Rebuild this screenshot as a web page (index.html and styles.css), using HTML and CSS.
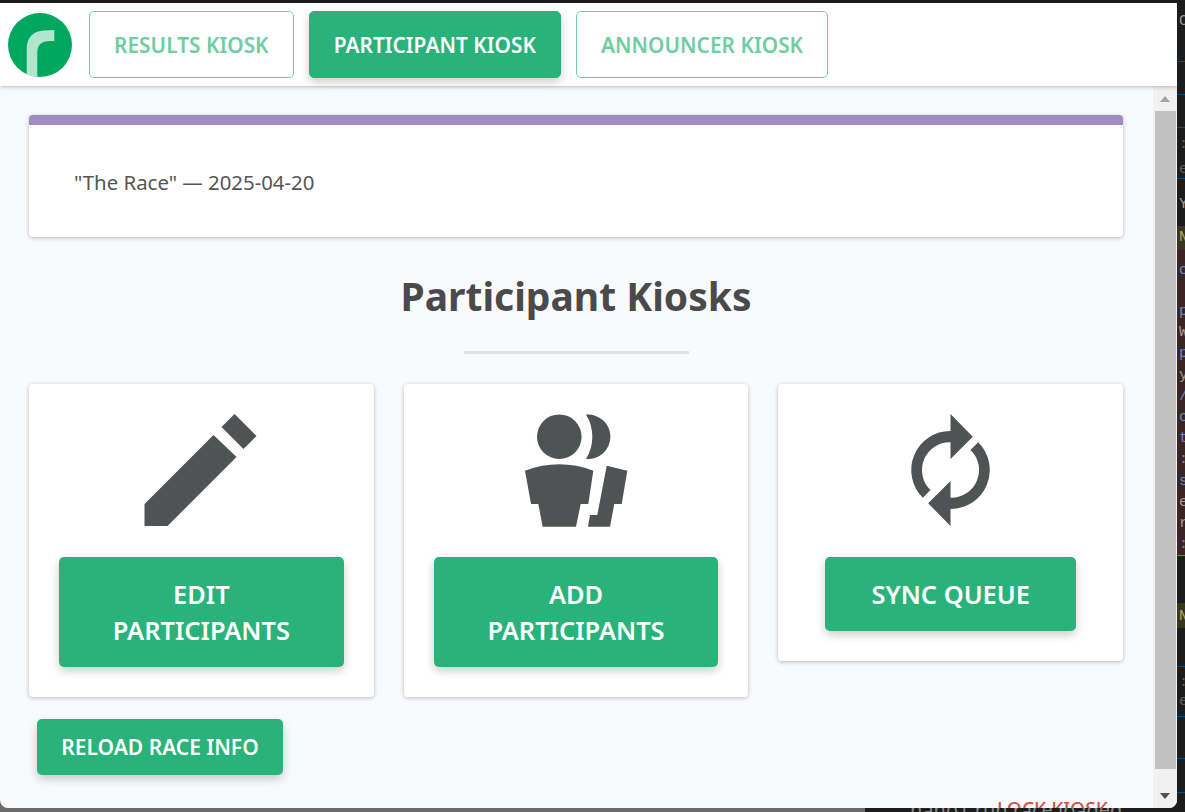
FILE: index.html
```html
<!DOCTYPE html>
<html lang="en">
<head>
  <meta charset="UTF-8">
  <meta name="viewport" content="width=device-width, initial-scale=1.0">
  <title>Participant Kiosks</title>
  <link rel="stylesheet" href="styles.css">
</head>
<body>
  <div class="screen">
    <div class="main-col">
      <div class="top-edge"></div>
      <div class="window">
        <header class="topnav">
          <svg class="logo" viewBox="0 0 64 64" aria-label="logo">
            <circle cx="32" cy="32" r="32" fill="#00a85f"/>
            <path d="M18.7 62V36C18.7 24 26 18 36 17.6L46.3 17V28H42C33 28 29.3 32 29.3 40V64Z" fill="#b2e5cd"/>
          </svg>
          <a class="tab">RESULTS KIOSK</a>
          <a class="tab active">PARTICIPANT KIOSK</a>
          <a class="tab">ANNOUNCER KIOSK</a>
        </header>
        <div class="body-row">
          <main class="content">
            <section class="race-card">
              <p>"The Race" — 2025-04-20</p>
            </section>
            <h1>Participant Kiosks</h1>
            <hr class="divider">
            <div class="cards">
              <div class="card">
                <svg class="icon" viewBox="0 0 114 114">
                  <path d="M0.5 90L69.5 21L92.5 43L23.5 112H0.5Z"/>
                  <path d="M90.5 0L112.5 22L99.5 35L77.5 13Z"/>
                </svg>
                <button class="btn big">EDIT PARTICIPANTS</button>
              </div>
              <div class="card">
                <svg class="icon" viewBox="0 0 114 114">
                  <circle cx="40.3" cy="22.7" r="22.3"/>
                  <path d="M67 .6A22.3 22.3 0 1 1 67 45A42 42 0 0 0 67 .6Z"/>
                  <path d="M6 56.7Q40.3 43.9 74.3 56.7L69.3 90H61.7L57 112.7H23.7L19.3 90H12Z"/>
                  <path d="M87.7 51.7L108.3 56.7L102.7 90H95.3L91 112.7H69L71 101H78.3Z"/>
                </svg>
                <button class="btn big">ADD PARTICIPANTS</button>
              </div>
              <div class="card">
                <svg class="icon" viewBox="0 0 114 114">
                  <path d="M56.5 0L78.8 22.7L56.5 45V28.3A27.7 27.7 0 0 0 36.5 76L28.8 83.7A39 39 0 0 1 56.5 17Z"/>
                  <path d="M56.5 112L34.2 89.3L56.5 67V83.7A27.7 27.7 0 0 0 76.5 36L84.2 28.3A39 39 0 0 1 56.5 95Z"/>
                </svg>
                <button class="btn big">SYNC QUEUE</button>
              </div>
            </div>
            <button class="btn reload">RELOAD RACE INFO</button>
          </main>
          <div class="scrollbar">
            <span class="arrow up"></span>
            <span class="thumb"></span>
            <span class="arrow down"></span>
          </div>
        </div>
        <span class="lock-link">LOCK KIOSK</span>
      </div>
      <div class="bottom-strip">
        <span class="log-line">nano1 run race loaded</span>
      </div>
    </div>

    <!-- sliver of the editor behind the window -->
    <div class="editor-edge">
      <div class="ln gap-12"></div>
      <div class="ln first-line">C</div>
      <div class="ln rule gap-30"></div>
      <div class="ln rule gap-33"></div>
      <div class="ln rule gap-33"></div>
      <div class="ln dim colon-top">:</div>
      <div class="ln dim rule er-top">er</div>
      <div class="ln y-line">Y</div>
      <div class="ln warn warn-top">N</div>
      <div class="err-block">
        <div class="ln link err-first">c</div>
        <div class="ln link row">p</div>
        <div class="ln row">W</div>
        <div class="ln link row">p</div>
        <div class="ln row">y</div>
        <div class="ln link row">/</div>
        <div class="ln link row">c</div>
        <div class="ln link row">t</div>
        <div class="ln link row">:</div>
        <div class="ln link row">s</div>
        <div class="ln row">e</div>
        <div class="ln row">r</div>
        <div class="ln link row">:</div>
      </div>
      <div class="ln gap-47"></div>
      <div class="ln warn warn-bottom">N</div>
      <div class="ln rule gap-39"></div>
      <div class="ln dim colon-bottom">:</div>
      <div class="ln dim rule er-bottom">er</div>
      <div class="ln rule gap-42"></div>
      <div class="ln rule gap-34"></div>
    </div>
  </div>
</body>
</html>
```
FILE: styles.css
```css
html, body {
  margin: 0;
  height: 100%;
}

body {
  background: #1c1c1c;
  font-family: "Noto Sans", sans-serif;
  color: #4a4a4a;
  overflow: hidden;
}

.screen {
  display: flex;
  height: 812px;
}

.main-col {
  width: 1177px;
  flex: none;
  display: flex;
  flex-direction: column;
  background: linear-gradient(to right, #6b6b6b 865px, #1c1c1c 865px);
}

.top-edge {
  height: 3px;
  flex: none;
  background: #1c1c1c;
}

.window {
  position: relative;
  height: 805px;
  flex: none;
  background: #f9fafc;
  border-radius: 0 0 8px 8px;
  overflow: hidden;
  display: flex;
  flex-direction: column;
}

/* Top nav */
.topnav {
  height: 83px;
  flex: none;
  display: flex;
  align-items: center;
  background: #fff;
  box-shadow: 0 1px 4px rgba(0, 0, 0, 0.25);
  position: relative;
  padding: 0 8px;
  box-sizing: border-box;
}

.logo {
  width: 64px;
  height: 64px;
  margin-right: 17px;
}

.tab {
  height: 67px;
  box-sizing: border-box;
  display: flex;
  align-items: center;
  padding: 0 24px;
  margin-right: 15px;
  font-size: 20.8px;
  letter-spacing: 0.05px;
  font-weight: 600;
  color: #6fcda3;
  background: #fff;
  border: 1px solid #6fcda3;
  border-radius: 5px;
}

.tab.active {
  background: #29b37a;
  border-color: #29b37a;
  color: #fff;
  box-shadow: 0 4px 10px rgba(0, 0, 0, 0.2);
}

/* Content */
.body-row {
  flex: 1;
  display: flex;
  min-height: 0;
}

.content {
  flex: 1;
  padding: 29px 30px 0 29px;
  box-sizing: border-box;
}

.race-card {
  height: 122px;
  box-sizing: border-box;
  background: #fff;
  border-top: 10px solid #a08bc3;
  border-radius: 4px;
  box-shadow: 0 1px 4px rgba(0, 0, 0, 0.25);
  padding: 45px 45px 0;
}

.race-card p {
  margin: 0;
  font-size: 20.4px;
  line-height: 24px;
  color: #555;
}

h1 {
  margin: 32px 0 0;
  font-size: 39px;
  line-height: 54px;
  font-weight: 700;
  text-align: center;
}

.divider {
  width: 225px;
  height: 3px;
  margin: 28px auto 30px;
  border: 0;
  background: #e0e2e6;
}

.cards {
  display: flex;
  align-items: flex-start;
  gap: 30px;
}

.card {
  flex: 1;
  background: #fff;
  border-radius: 4px;
  box-shadow: 0 1px 4px rgba(0, 0, 0, 0.25);
  padding: 30px;
  display: flex;
  flex-direction: column;
  align-items: center;
}

.icon {
  width: 114px;
  height: 114px;
  fill: #505353;
  margin-bottom: 29px;
}

.btn {
  font-family: inherit;
  font-weight: 600;
  color: #fff;
  background: #29b37a;
  border: 0;
  border-radius: 5px;
  box-shadow: 0 4px 10px rgba(0, 0, 0, 0.2);
}

.btn.big {
  font-size: 25.4px;
  line-height: 36px;
  padding: 19px 46px;
}

.btn.reload {
  display: block;
  margin: 22px 0 0 8px;
  width: 246px;
  height: 56px;
  padding: 0;
  font-size: 21px;
}

/* Scrollbar */
.scrollbar {
  width: 24px;
  flex: none;
  background: #f1f1f1;
  display: flex;
  flex-direction: column;
  align-items: center;
}

.arrow {
  width: 0;
  height: 0;
  flex: none;
  border-left: 5px solid transparent;
  border-right: 5px solid transparent;
}

.arrow.up {
  border-bottom: 6px solid #a3a3a3;
  margin: 10px 0 9px;
}

.arrow.down {
  border-top: 6px solid #505050;
  margin: 24px 0 0;
}

.thumb {
  flex: none;
  height: 658px;
  width: 21px;
  margin-left: 1px;
  background: #c1c1c1;
}

/* Rest of the page, cut off by the window bottom */
.lock-link {
  position: absolute;
  left: 997px;
  top: 792px;
  font-size: 19.2px;
  line-height: 28px;
  font-weight: 500;
  color: #d0524e;
  white-space: nowrap;
}

.bottom-strip {
  flex: 1;
  position: relative;
  overflow: hidden;
}

.log-line {
  position: absolute;
  left: 910px;
  top: -12px;
  font-size: 20px;
  line-height: 28px;
  color: #8a8a8a;
  white-space: nowrap;
}

/* Editor sliver on the right */
.editor-edge {
  width: 8px;
  flex: none;
  overflow: hidden;
  font-family: "Liberation Mono", monospace;
  font-size: 15px;
  color: #9a9a9a;
}

.ln {
  box-sizing: border-box;
  padding-left: 2px;
  white-space: nowrap;
  line-height: 20px;
}

.ln.rule {
  border-bottom: 1px solid #0e4a7a;
}

.ln.dim {
  color: #5c5c5c;
}

.ln.warn {
  background: #38361f;
  color: #a8a66c;
}

.ln.link {
  color: #6a86bd;
}

.gap-12 { height: 12px; }
.gap-30 { height: 30px; }
.gap-33 { height: 33px; }
.gap-34 { height: 34px; }
.gap-39 { height: 39px; }
.gap-42 { height: 42px; }
.gap-47 { height: 47px; }

.first-line { height: 20px; }
.colon-top { height: 32px; line-height: 34px; }
.er-top { height: 19px; }
.y-line { height: 47px; line-height: 52px; }
.warn-top { height: 24px; line-height: 24px; }
.err-first { height: 51px; line-height: 42px; }
.warn-bottom { height: 25px; line-height: 28px; }
.colon-bottom { height: 25px; line-height: 32px; }
.er-bottom { height: 25px; }

.err-block {
  background: #3a2424;
  color: #a89a94;
  border-bottom: 1px solid #5a7fb0;
}

.ln.row {
  height: 21.2px;
  line-height: 21px;
}
```
